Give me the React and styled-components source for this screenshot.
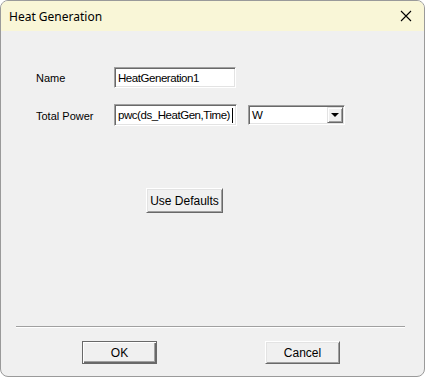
import styled, { createGlobalStyle } from "styled-components"

const Global = createGlobalStyle`
  html, body {
    margin: 0;
    padding: 0;
    background: #ffffff;
  }
  * {
    box-sizing: border-box;
  }
`

const Window = styled.div`
  width: 425px;
  height: 377px;
  display: flex;
  flex-direction: column;
  border: 1px solid #9a9a9a;
  border-radius: 8px;
  overflow: hidden;
  background: #f0f0f0;
  font-family: "Liberation Sans", Arial, sans-serif;
  font-size: 11px;
  color: #000;
`

const TitleBar = styled.div`
  height: 30px;
  flex-shrink: 0;
  display: flex;
  align-items: center;
  justify-content: space-between;
  padding: 0 12px 0 8px;
  background: #f9f6d7;
  font-family: "Noto Sans", "Open Sans", sans-serif;
  font-size: 12px;
`

const Close = styled.svg`
  width: 12px;
  height: 12px;
`

const Body = styled.div`
  flex: 1;
  display: flex;
  flex-direction: column;
  padding: 36px 19px 12px 15px;
`

const Form = styled.div`
  display: grid;
  grid-template-columns: 78px auto;
  row-gap: 16px;
  padding-left: 20px;
  align-items: center;
`

const Label = styled.span`
  padding-top: 1px;
`

const FieldRow = styled.div`
  display: flex;
  align-items: center;
  gap: 11px;
`

const Sunken = styled.div`
  width: ${p => p.$w}px;
  height: ${p => p.$h}px;
  display: flex;
  align-items: center;
  background: #fff;
  border: 1px solid;
  border-color: #a0a0a0 #ffffff #ffffff #a0a0a0;
  box-shadow: inset 1px 1px 0 #696969, inset -1px -1px 0 #e3e3e3;
  padding: 0 1px 0 3px;
  font-size: 11.5px;
  letter-spacing: -0.45px;
  white-space: nowrap;
  overflow: hidden;
`

const Caret = styled.span`
  display: inline-block;
  flex-shrink: 0;
  width: 1px;
  height: 15px;
  background: #000;
  margin-left: 2px;
`

const SelectText = styled.span`
  flex: 1;
`

const DropButton = styled.div`
  width: 16px;
  height: 16px;
  display: flex;
  align-items: center;
  justify-content: center;
  background: #f0f0f0;
  border: 1px solid;
  border-color: #e3e3e3 #696969 #696969 #e3e3e3;
  box-shadow: inset 1px 1px 0 #fff, inset -1px -1px 0 #a0a0a0;
`

const Arrow = styled.span`
  width: 0;
  height: 0;
  border-left: 4px solid transparent;
  border-right: 4px solid transparent;
  border-top: 4px solid #000;
`

const Button = styled.div`
  width: ${p => p.$w}px;
  height: ${p => p.$h}px;
  display: flex;
  align-items: center;
  justify-content: center;
  background: #f0f0f0;
  font-size: 12px;
  border: 1px solid;
  border-color: ${p => (p.$default ? "#696969" : "#ffffff #696969 #696969 #ffffff")};
  box-shadow: ${p =>
    p.$default
      ? "inset 1px 1px 0 #fff, inset -1px -1px 0 #696969, inset -2px -2px 0 #a0a0a0"
      : "inset 1px 1px 0 #e3e3e3, inset -1px -1px 0 #a0a0a0"};
`

const DefaultsRow = styled.div`
  margin-top: 62px;
  padding-left: 130px;
`

const Spacer = styled.div`
  flex: 1;
`

const Separator = styled.div`
  height: 2px;
  border-top: 1px solid #a0a0a0;
  border-bottom: 1px solid #ffffff;
`

const Footer = styled.div`
  display: flex;
  padding: 13px 0 0 66px;
  gap: 108px;
`

export default function App() {
  return (
    <>
      <Global />
      <Window>
        <TitleBar>
          Heat Generation
          <Close viewBox="0 0 12 12">
            <path d="M1 1 L11 11 M11 1 L1 11" stroke="#000" strokeWidth="1.1" />
          </Close>
        </TitleBar>
        <Body>
          <Form>
            <Label>Name</Label>
            <Sunken $w={122} $h={21}>HeatGeneration1</Sunken>
            <Label>Total Power</Label>
            <FieldRow>
              <Sunken $w={123} $h={22}>
                pwc(ds_HeatGen,Time)<Caret />
              </Sunken>
              <Sunken $w={97} $h={20}>
                <SelectText>W</SelectText>
                <DropButton>
                  <Arrow />
                </DropButton>
              </Sunken>
            </FieldRow>
          </Form>
          <DefaultsRow>
            <Button $w={77} $h={25}>Use Defaults</Button>
          </DefaultsRow>
          <Spacer />
          <Separator />
          <Footer>
            <Button $w={75} $h={23} $default>OK</Button>
            <Button $w={75} $h={23}>Cancel</Button>
          </Footer>
        </Body>
      </Window>
    </>
  )
}
